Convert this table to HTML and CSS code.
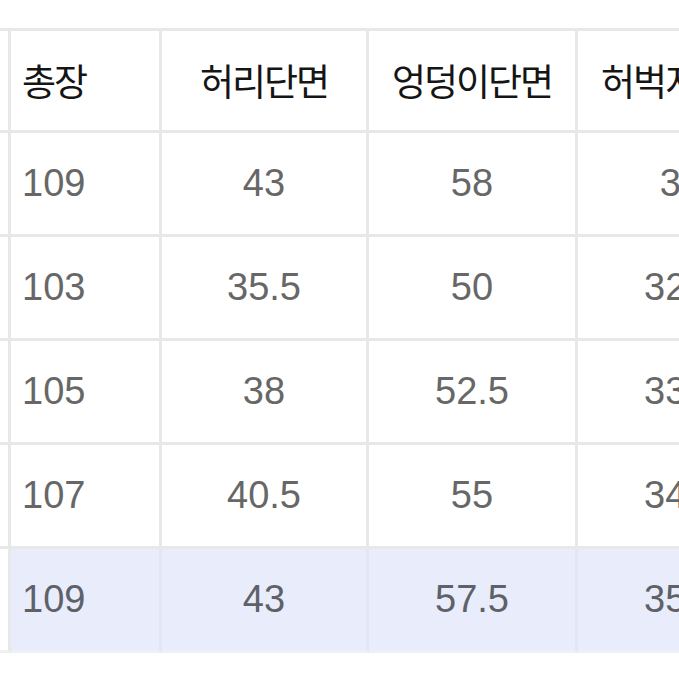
FILE: index.html
```html
<!DOCTYPE html>
<html lang="ko">
<head>
<meta charset="utf-8">
<link rel="stylesheet" href="styles.css">
</head>
<body>
<div class="frame">
  <div class="sheet">
    <div class="cell head edge"></div>
    <div class="cell head first">총장</div>
    <div class="cell head">허리단면</div>
    <div class="cell head">엉덩이단면</div>
    <div class="cell head">허벅지단면</div>

    <div class="cell edge"></div>
    <div class="cell first">109</div>
    <div class="cell">43</div>
    <div class="cell">58</div>
    <div class="cell">35</div>

    <div class="cell edge"></div>
    <div class="cell first">103</div>
    <div class="cell">35.5</div>
    <div class="cell">50</div>
    <div class="cell">32.5</div>

    <div class="cell edge"></div>
    <div class="cell first">105</div>
    <div class="cell">38</div>
    <div class="cell">52.5</div>
    <div class="cell">33.5</div>

    <div class="cell edge"></div>
    <div class="cell first">107</div>
    <div class="cell">40.5</div>
    <div class="cell">55</div>
    <div class="cell">34.5</div>

    <div class="cell edge hl-edge"></div>
    <div class="cell first hl">109</div>
    <div class="cell hl">43</div>
    <div class="cell hl">57.5</div>
    <div class="cell hl">35.5</div>
  </div>
</div>
</body>
</html>
```

FILE: styles.css
```css
html, body {
  margin: 0;
  padding: 0;
  background: #ffffff;
}

.frame {
  width: 679px;
  height: 679px;
  overflow: hidden;
  padding-top: 28px;
  box-sizing: border-box;
}

.sheet {
  display: grid;
  grid-template-columns: 100px 151px 207px 209px 209px;
  grid-template-rows: 102px repeat(5, 104px);
  margin-left: -89px;
  width: max-content;
  border-top: 3px solid #e8e8e8;
}

.cell {
  box-sizing: border-box;
  border-right: 3px solid #e8e8e8;
  border-bottom: 3px solid #e8e8e8;
  display: flex;
  align-items: center;
  justify-content: center;
  font-family: "Liberation Sans", Arial, "Noto Sans CJK KR", sans-serif;
  font-size: 38px;
  color: #676767;
  background: #ffffff;
  white-space: nowrap;
}

.head {
  font-family: "Noto Sans CJK KR", sans-serif;
  font-size: 37px;
  font-weight: 400;
  letter-spacing: -2px;
  color: #151515;
  padding-bottom: 2px;
}

.first {
  justify-content: flex-start;
  padding-left: 11px;
}

.hl {
  background: #e9edfb;
  border-right-color: #e3e7f5;
  border-bottom-color: #eef0f8;
  color: #5e6168;
}

.hl-edge {
  border-bottom-color: #f0f0f0;
}
```
